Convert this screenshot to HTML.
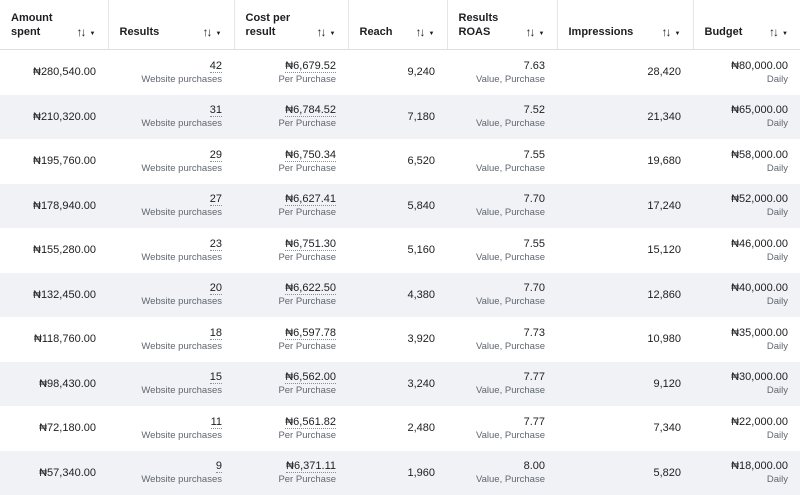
<!DOCTYPE html>
<html><head><meta charset="utf-8"><style>
body{margin:0;width:800px;height:495px;overflow:hidden;background:#fff;font-family:"Liberation Sans",Arial,sans-serif;color:#1c1e21}
table{border-collapse:collapse;table-layout:fixed;width:800px}
th{height:49px;border-bottom:1px solid #dddfe2;border-right:1px solid #e4e6eb;text-align:left;font-size:11px;font-weight:bold;padding:0 0 0 11px;position:relative;vertical-align:middle;line-height:14px}
th:last-child{border-right:none}
th .s{position:absolute;right:12px;top:25px;font-size:12px;font-weight:bold;letter-spacing:-2px}
th .s small{font-size:6px;margin-left:5px;letter-spacing:0;vertical-align:1px}
td{height:44.5px;padding:0 12px 0 0;text-align:right;font-size:11px;line-height:14px;vertical-align:middle}
tr.g td{background:#f0f2f5}
.v{display:block}
.u{border-bottom:1px dotted #8a8d91}
.sub{display:block;font-size:9.5px;color:#606770;line-height:13px}
</style></head><body>
<table>
<colgroup><col style="width:108px"><col style="width:126px"><col style="width:114px"><col style="width:99px"><col style="width:110px"><col style="width:136px"><col style="width:107px"></colgroup>
<tr>
<th><span>Amount<br>spent</span><span class="s">↑↓<small>▼</small></span></th>
<th><span style="position:relative;top:7px">Results</span><span class="s">↑↓<small>▼</small></span></th>
<th><span>Cost per<br>result</span><span class="s">↑↓<small>▼</small></span></th>
<th><span style="position:relative;top:7px">Reach</span><span class="s">↑↓<small>▼</small></span></th>
<th><span>Results<br>ROAS</span><span class="s">↑↓<small>▼</small></span></th>
<th><span style="position:relative;top:7px">Impressions</span><span class="s">↑↓<small>▼</small></span></th>
<th><span style="position:relative;top:7px">Budget</span><span class="s">↑↓<small>▼</small></span></th>
</tr>
<tr><td>₦280,540.00</td><td><span class="v"><span class="u">42</span></span><span class="sub">Website purchases</span></td><td><span class="v"><span class="u">₦6,679.52</span></span><span class="sub">Per Purchase</span></td><td>9,240</td><td><span class="v">7.63</span><span class="sub">Value, Purchase</span></td><td>28,420</td><td><span class="v">₦80,000.00</span><span class="sub">Daily</span></td></tr>
<tr class="g"><td>₦210,320.00</td><td><span class="v"><span class="u">31</span></span><span class="sub">Website purchases</span></td><td><span class="v"><span class="u">₦6,784.52</span></span><span class="sub">Per Purchase</span></td><td>7,180</td><td><span class="v">7.52</span><span class="sub">Value, Purchase</span></td><td>21,340</td><td><span class="v">₦65,000.00</span><span class="sub">Daily</span></td></tr>
<tr><td>₦195,760.00</td><td><span class="v"><span class="u">29</span></span><span class="sub">Website purchases</span></td><td><span class="v"><span class="u">₦6,750.34</span></span><span class="sub">Per Purchase</span></td><td>6,520</td><td><span class="v">7.55</span><span class="sub">Value, Purchase</span></td><td>19,680</td><td><span class="v">₦58,000.00</span><span class="sub">Daily</span></td></tr>
<tr class="g"><td>₦178,940.00</td><td><span class="v"><span class="u">27</span></span><span class="sub">Website purchases</span></td><td><span class="v"><span class="u">₦6,627.41</span></span><span class="sub">Per Purchase</span></td><td>5,840</td><td><span class="v">7.70</span><span class="sub">Value, Purchase</span></td><td>17,240</td><td><span class="v">₦52,000.00</span><span class="sub">Daily</span></td></tr>
<tr><td>₦155,280.00</td><td><span class="v"><span class="u">23</span></span><span class="sub">Website purchases</span></td><td><span class="v"><span class="u">₦6,751.30</span></span><span class="sub">Per Purchase</span></td><td>5,160</td><td><span class="v">7.55</span><span class="sub">Value, Purchase</span></td><td>15,120</td><td><span class="v">₦46,000.00</span><span class="sub">Daily</span></td></tr>
<tr class="g"><td>₦132,450.00</td><td><span class="v"><span class="u">20</span></span><span class="sub">Website purchases</span></td><td><span class="v"><span class="u">₦6,622.50</span></span><span class="sub">Per Purchase</span></td><td>4,380</td><td><span class="v">7.70</span><span class="sub">Value, Purchase</span></td><td>12,860</td><td><span class="v">₦40,000.00</span><span class="sub">Daily</span></td></tr>
<tr><td>₦118,760.00</td><td><span class="v"><span class="u">18</span></span><span class="sub">Website purchases</span></td><td><span class="v"><span class="u">₦6,597.78</span></span><span class="sub">Per Purchase</span></td><td>3,920</td><td><span class="v">7.73</span><span class="sub">Value, Purchase</span></td><td>10,980</td><td><span class="v">₦35,000.00</span><span class="sub">Daily</span></td></tr>
<tr class="g"><td>₦98,430.00</td><td><span class="v"><span class="u">15</span></span><span class="sub">Website purchases</span></td><td><span class="v"><span class="u">₦6,562.00</span></span><span class="sub">Per Purchase</span></td><td>3,240</td><td><span class="v">7.77</span><span class="sub">Value, Purchase</span></td><td>9,120</td><td><span class="v">₦30,000.00</span><span class="sub">Daily</span></td></tr>
<tr><td>₦72,180.00</td><td><span class="v"><span class="u">11</span></span><span class="sub">Website purchases</span></td><td><span class="v"><span class="u">₦6,561.82</span></span><span class="sub">Per Purchase</span></td><td>2,480</td><td><span class="v">7.77</span><span class="sub">Value, Purchase</span></td><td>7,340</td><td><span class="v">₦22,000.00</span><span class="sub">Daily</span></td></tr>
<tr class="g"><td>₦57,340.00</td><td><span class="v"><span class="u">9</span></span><span class="sub">Website purchases</span></td><td><span class="v"><span class="u">₦6,371.11</span></span><span class="sub">Per Purchase</span></td><td>1,960</td><td><span class="v">8.00</span><span class="sub">Value, Purchase</span></td><td>5,820</td><td><span class="v">₦18,000.00</span><span class="sub">Daily</span></td></tr>
</table>
</body></html>
